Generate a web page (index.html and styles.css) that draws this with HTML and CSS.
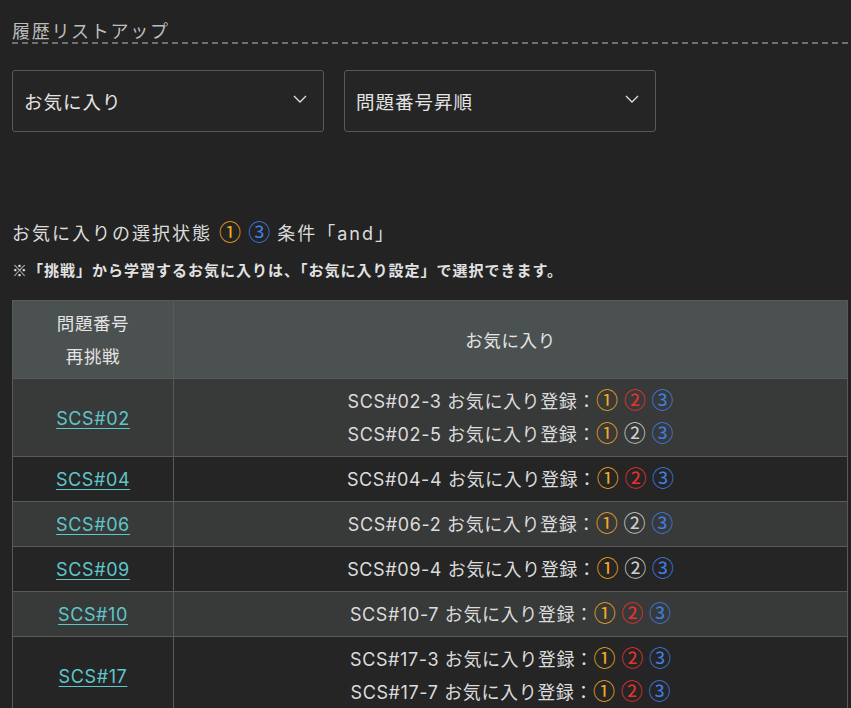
FILE: index.html
```html
<!DOCTYPE html>
<html lang="ja">
<head>
<meta charset="utf-8">
<title>履歴リストアップ</title>
<link rel="stylesheet" href="styles.css">
</head>
<body>
<div class="wrap">
  <h2 class="title">履歴リストアップ</h2>
  <div class="selects">
    <div class="select"><span>お気に入り</span><svg class="chev" width="14" height="8" viewBox="0 0 14 8"><polyline points="1,1 7,7 13,1" fill="none" stroke="#e0e0e0" stroke-width="1.3"/></svg></div>
    <div class="select"><span>問題番号昇順</span><svg class="chev" width="14" height="8" viewBox="0 0 14 8"><polyline points="1,1 7,7 13,1" fill="none" stroke="#e0e0e0" stroke-width="1.3"/></svg></div>
  </div>
  <p class="status">お気に入りの選択状態 <span class="c1">①</span> <span class="c3">③</span> 条件「and」</p>
  <p class="note">※「挑戦」から学習するお気に入りは、「お気に入り設定」で選択できます。</p>
  <table class="list">
    <thead>
      <tr><th class="col1">問題番号<br>再挑戦</th><th>お気に入り</th></tr>
    </thead>
    <tbody>
      <tr class="odd">
        <td class="col1"><a href="#">SCS#02</a></td>
        <td><div>SCS#02-3 お気に入り登録：<span class="c1">①</span> <span class="c2">②</span> <span class="c3">③</span></div><div>SCS#02-5 お気に入り登録：<span class="c1">①</span> <span class="c0">②</span> <span class="c3">③</span></div></td>
      </tr>
      <tr class="even">
        <td class="col1"><a href="#">SCS#04</a></td>
        <td><div>SCS#04-4 お気に入り登録：<span class="c1">①</span> <span class="c2">②</span> <span class="c3">③</span></div></td>
      </tr>
      <tr class="odd">
        <td class="col1"><a href="#">SCS#06</a></td>
        <td><div>SCS#06-2 お気に入り登録：<span class="c1">①</span> <span class="c0">②</span> <span class="c3">③</span></div></td>
      </tr>
      <tr class="even">
        <td class="col1"><a href="#">SCS#09</a></td>
        <td><div>SCS#09-4 お気に入り登録：<span class="c1">①</span> <span class="c0">②</span> <span class="c3">③</span></div></td>
      </tr>
      <tr class="odd">
        <td class="col1"><a href="#">SCS#10</a></td>
        <td><div>SCS#10-7 お気に入り登録：<span class="c1">①</span> <span class="c2">②</span> <span class="c3">③</span></div></td>
      </tr>
      <tr class="even">
        <td class="col1"><a href="#">SCS#17</a></td>
        <td><div>SCS#17-3 お気に入り登録：<span class="c1">①</span> <span class="c2">②</span> <span class="c3">③</span></div><div>SCS#17-7 お気に入り登録：<span class="c1">①</span> <span class="c2">②</span> <span class="c3">③</span></div></td>
      </tr>
    </tbody>
  </table>
</div>
</body>
</html>
```

FILE: styles.css
```css
html, body {
  margin: 0;
  padding: 0;
  background: #232323;
}
body {
  color: #dcdcdc;
  font-family: Inter, "Noto Sans CJK JP", sans-serif;
  font-size: 18px;
}
.wrap {
  padding: 0 3px 0 12px;
}
.title {
  margin: 0 -3px 0 0;
  padding: 18px 0 2px;
  font-family: "Noto Sans CJK JP", sans-serif;
  font-size: 18px;
  font-weight: normal;
  line-height: 24px;
  letter-spacing: 1.7px;
  color: #bdbdbd;
  background-image: repeating-linear-gradient(90deg, #707070 0 6px, transparent 6px 10px);
  background-size: 100% 2px;
  background-repeat: no-repeat;
  background-position: left bottom;
}
.selects {
  display: flex;
  gap: 20px;
  margin-top: 26px;
}
.select {
  box-sizing: border-box;
  width: 312px;
  height: 62px;
  border: 1px solid #585858;
  border-radius: 3px;
  background: #252525;
  display: flex;
  align-items: center;
  justify-content: space-between;
  padding: 0 16px 0 11px;
  font-size: 18.5px;
  letter-spacing: 1px;
  color: #e4e4e4;
}
.chev {
  margin-top: -4px;
}
.status {
  margin: 89px 0 0;
  line-height: 26px;
  font-size: 18px;
  letter-spacing: 2px;
}
.note {
  margin: 11px 0 0;
  line-height: 24px;
  font-family: "Noto Sans CJK JP", sans-serif;
  font-size: 15px;
  font-weight: bold;
  letter-spacing: 1px;
  color: #e2e2e2;
}
.c0, .c1, .c2, .c3 {
  font-family: "Noto Sans CJK JP", sans-serif;
  font-size: 22px;
  line-height: 0;
  letter-spacing: 0;
}
.c1 { color: #f2a91f; }
.c2 { color: #e5332f; }
.c3 { color: #3f7fe4; }
.c0 { color: #d0d0d0; }
.list {
  margin-top: 18px;
  width: 836px;
  border-collapse: collapse;
  font-size: 18px;
  letter-spacing: 0.6px;
}
.list th, .list td {
  border: 1px solid #595959;
  padding: 6px 8px 5px;
  line-height: 33px;
  text-align: center;
  font-weight: normal;
}
.list th {
  background: #4b5050;
  color: #e4e4e4;
  font-size: 17.5px;
}
.list .col1 {
  width: 144px;
}
.list tr.odd td {
  background: #383939;
}
.list tr.even td {
  background: #252525;
}
.list a {
  color: #5fc6cb;
  text-decoration: underline;
  text-underline-offset: 3px;
}
```
